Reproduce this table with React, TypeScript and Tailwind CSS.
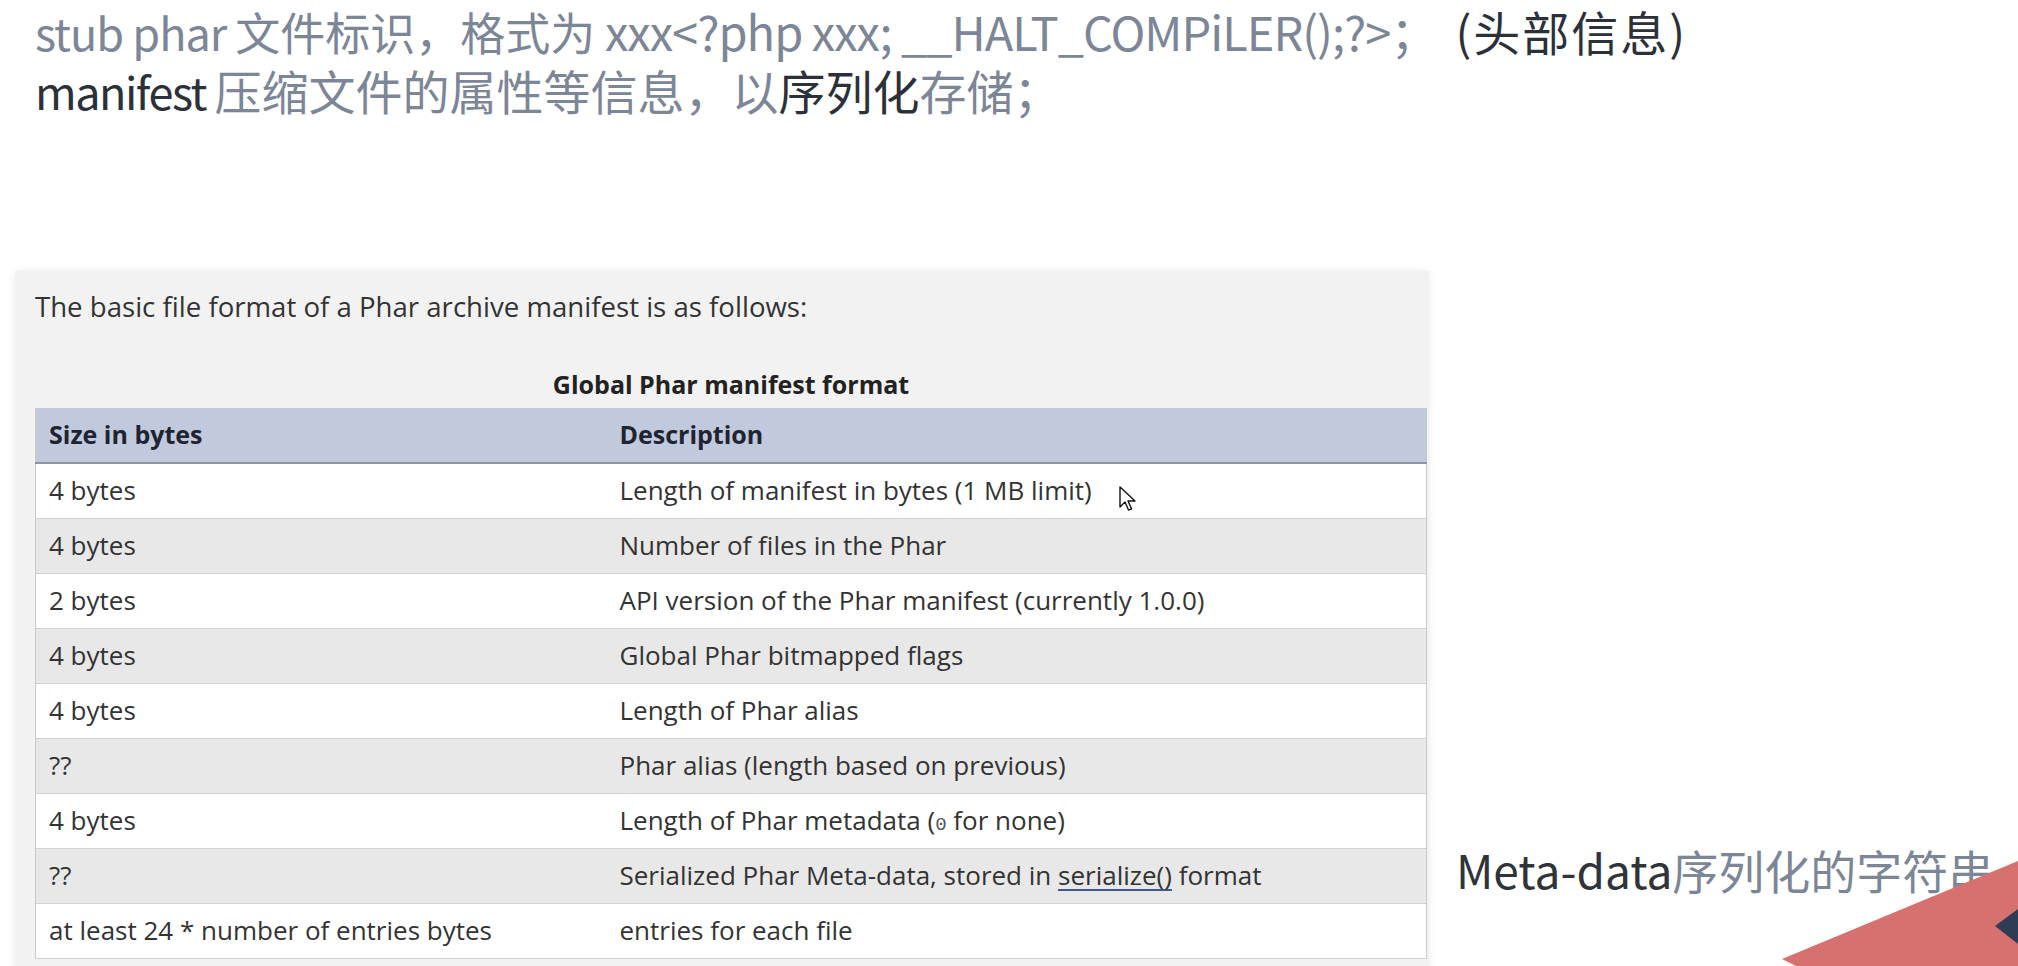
import React from "react";

const rows: { size: string; desc: React.ReactNode }[] = [
	{ size: "4 bytes", desc: "Length of manifest in bytes (1 MB limit)" },
	{ size: "4 bytes", desc: "Number of files in the Phar" },
	{ size: "2 bytes", desc: "API version of the Phar manifest (currently 1.0.0)" },
	{ size: "4 bytes", desc: "Global Phar bitmapped flags" },
	{ size: "4 bytes", desc: "Length of Phar alias" },
	{ size: "??", desc: "Phar alias (length based on previous)" },
	{
		size: "4 bytes",
		desc: (
			<>
				Length of Phar metadata (
				<code className="font-['Liberation_Mono',monospace] text-[19px] text-[#555]">0</code> for none)
			</>
		),
	},
	{
		size: "??",
		desc: (
			<>
				Serialized Phar Meta-data, stored in{" "}
				<span className="underline decoration-[#3c5a8c] underline-offset-4">serialize()</span> format
			</>
		),
	},
	{ size: "at least 24 * number of entries bytes", desc: "entries for each file" },
];

function Cursor() {
	return (
		<svg className="absolute left-[1119px] top-[486px]" width="18" height="27" viewBox="0 0 18 27">
			<path
				d="M1 1 L1 21 L6 16 L9.5 24 L12.5 22.8 L9 15 L16 15 Z"
				fill="#fff"
				stroke="#111"
				strokeWidth="1.4"
				strokeLinejoin="round"
			/>
		</svg>
	);
}

function Corner() {
	return (
		<svg className="absolute right-0 bottom-0" width="240" height="110" viewBox="0 0 240 110">
			<polygon points="4,103 240,5 240,110 18,110" fill="#d6716f" />
			<polygon points="217,70 240,53 240,88" fill="#2e3d55" />
		</svg>
	);
}

export default function App() {
	return (
		<div className="relative w-[2018px] h-[966px] overflow-hidden bg-white">
			<div className="pl-[35px] pt-[2px] text-[47px] leading-[58px] text-[#7d8696] font-['Noto_Sans_CJK_SC',sans-serif]">
				<p className="whitespace-nowrap">
					<span className="text-[45px] tracking-[-1px]">stub phar </span>
					<span className="text-[45px]">文件标识，格式为</span>
					<span className="tracking-[-1px]"> xxx&lt;?php xxx; __HALT_COMPiLER();?&gt;</span>；
					<span className="ml-[18px] tracking-[2px] text-[#2c3038]">(头部信息)</span>
				</p>
				<p className="whitespace-nowrap">
					<span className="text-[45px] tracking-[-1.5px] text-[#2c3038]">manifest </span>压缩文件的属性等信息，以
					<span className="text-[#2c3038]">序列化</span>存储；
				</p>
			</div>

			<div className="flex mt-[151px]">
				<div className="ml-[15px] w-[1414px] h-[720px] bg-[#f2f2f2] shadow-[0_0_8px_rgba(0,0,0,0.08)] pt-[17px] font-['Open_Sans',sans-serif] text-[#333]">
					<p className="pl-[20px] text-[27.6px] leading-[36px]">
						The basic file format of a Phar archive manifest is as follows:
					</p>
					<table className="ml-[20px] mt-[42px] w-[1392px] border-collapse text-[26px]">
						<caption className="pb-[6px] font-bold text-[25px] leading-[36px] text-[#222]">
							Global Phar manifest format
						</caption>
						<thead>
							<tr className="bg-[#c1c9dd] border-b-2 border-[#8c93a6]">
								<th className="w-[570px] h-[55px] px-[13px] text-left text-[25px] font-bold text-[#1e2430] border-l border-[#c9c9c9]">
									Size in bytes
								</th>
								<th className="h-[55px] px-[14px] text-left text-[25px] font-bold text-[#1e2430] border-r border-[#c9c9c9]">
									Description
								</th>
							</tr>
						</thead>
						<tbody>
							{rows.map((r, i) => (
								<tr
									key={i}
									className={
										(i % 2 === 0 ? "bg-white" : "bg-[#e8e8e8]") +
										" border-b border-[#d2d2d2]"
									}
								>
									<td className="h-[55px] px-[13px] border-l border-[#c9c9c9]">{r.size}</td>
									<td className="h-[55px] px-[14px] border-r border-[#c9c9c9]">{r.desc}</td>
								</tr>
							))}
						</tbody>
					</table>
				</div>

				<div className="pl-[27px] pt-[568px]">
					<p className="whitespace-nowrap text-[46px] leading-[60px] text-[#7d8696] font-['Noto_Sans_CJK_SC',sans-serif]">
						<span className="text-[#2f333a]">Meta-data</span>序列化的字符串
					</p>
				</div>
			</div>

			<Cursor />
			<Corner />
		</div>
	);
}
